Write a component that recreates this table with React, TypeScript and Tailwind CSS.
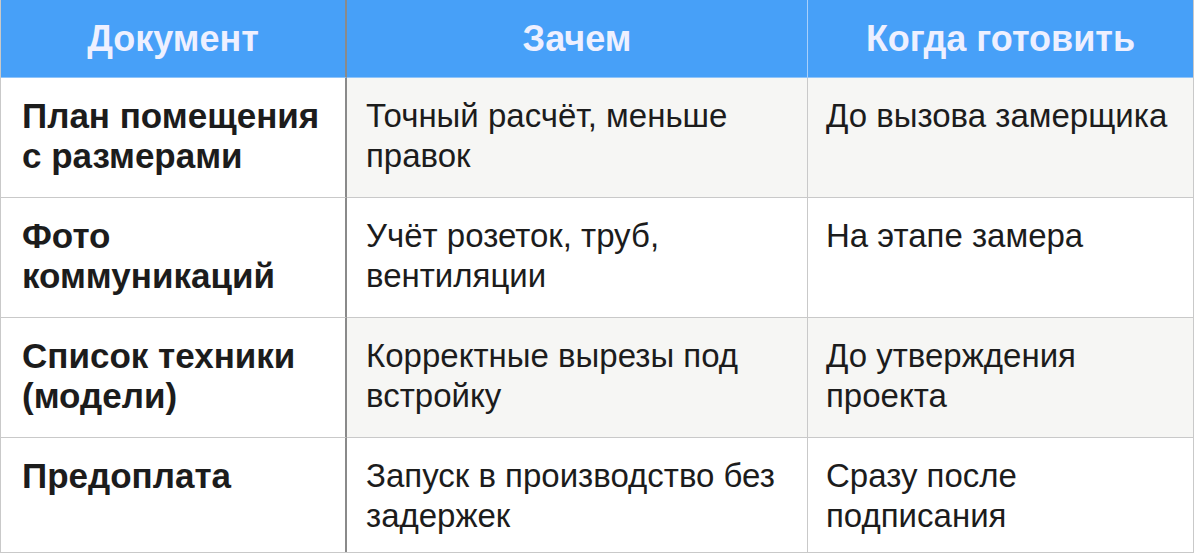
const rows = [
  { doc: "План помещения с размерами", why: "Точный расчёт, меньше правок", when: "До вызова замерщика", h: "h-[120px]" },
  { doc: "Фото коммуникаций", why: "Учёт розеток, труб, вентиляции", when: "На этапе замера", h: "h-[120px]" },
  { doc: "Список техники (модели)", why: "Корректные вырезы под встройку", when: "До утверждения проекта", h: "h-[120px]" },
  { doc: "Предоплата", why: "Запуск в производство без задержек", when: "Сразу после подписания", h: "h-[114px]" },
];

export default function App() {
  return (
    <div className="w-[1194px] bg-white font-['Liberation_Sans',Arial,sans-serif] text-[33px] leading-[40px] text-[#1c1c1c]">
      <div className="border-x border-b border-[#c9c9c9]">
        <div className="grid grid-cols-[346px_461px_1fr]">
          <div className="flex h-[78px] items-center justify-center border-r-2 border-b border-r-[#8a8a8a] border-b-[#8fc4fa] bg-[#47a0f8] text-[36px] font-bold text-[#eef0ff]">
            Документ
          </div>
          <div className="flex h-[78px] items-center justify-center border-r border-b border-r-[#a9d0fb] border-b-[#8fc4fa] bg-[#47a0f8] text-[36px] font-bold text-[#eef0ff]">
            Зачем
          </div>
          <div className="flex h-[78px] items-center justify-center border-b border-b-[#8fc4fa] bg-[#47a0f8] text-[36px] font-bold text-[#eef0ff]">
            Когда готовить
          </div>

          {rows.map((r, i) => {
            const shade = i % 2 === 0 ? "bg-[#f6f6f4]" : "bg-white";
            const last = i === rows.length - 1;
            return (
              <div key={r.doc} className="contents">
                <div className={`${r.h} border-r-2 border-r-[#8a8a8a] ${last ? "" : "border-b border-b-[#c9c9c9]"} bg-white pl-[21px] pr-[12px] pt-[18px] text-[35px] font-bold`}>
                  {r.doc}
                </div>
                <div className={`${r.h} border-r border-r-[#c9c9c9] ${last ? "" : "border-b border-b-[#c9c9c9]"} ${shade} pl-[19px] pr-4 pt-[18px]`}>
                  {r.why}
                </div>
                <div className={`${r.h} ${last ? "" : "border-b border-b-[#c9c9c9]"} ${shade} pl-[18px] pr-4 pt-[18px]`}>
                  {r.when}
                </div>
              </div>
            );
          })}
        </div>
      </div>
    </div>
  );
}
